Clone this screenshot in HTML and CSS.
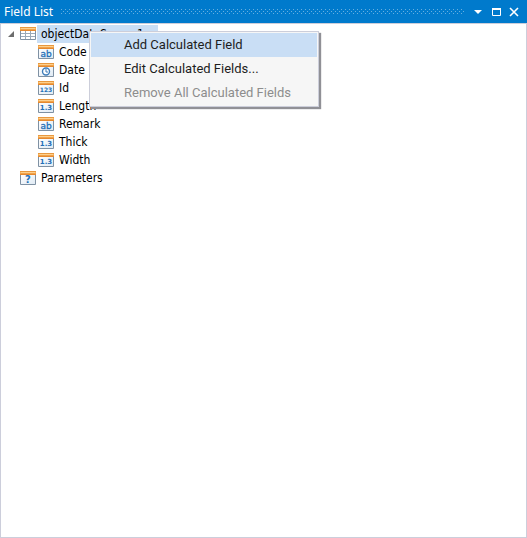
FILE: index.html
```html
<!DOCTYPE html>
<html lang="en">
<head>
<meta charset="utf-8">
<title>Field List</title>
<link rel="stylesheet" href="styles.css">
</head>
<body>
<svg class="defs" aria-hidden="true">
  <defs>
    <linearGradient id="orange" x1="0" y1="0" x2="0" y2="1">
      <stop offset="0" stop-color="#e08a30"/>
      <stop offset=".4" stop-color="#f9b860"/>
      <stop offset="1" stop-color="#e07c22"/>
    </linearGradient>
    <linearGradient id="paper" x1="0" y1="0" x2="1" y2="1">
      <stop offset="0" stop-color="#ffffff"/>
      <stop offset="1" stop-color="#dfeaf4"/>
    </linearGradient>
    <symbol id="frame" viewBox="0 0 16 16">
      <path d="M.5 4.500h15v10H.5z" fill="url(#paper)" stroke="#7f91a3"/>
      <path d="M0 1h16v4H0z" fill="url(#orange)"/>
      <path d="M1 2h14v1H1z" fill="#fdd08e"/>
    </symbol>
  </defs>
</svg>
<main class="panel">
  <header class="titlebar">
    <h1 class="title">Field List</h1>
    <svg class="grip" aria-hidden="true">
      <defs>
        <pattern id="dots" width="4" height="4" patternUnits="userSpaceOnUse">
          <path d="M0 0h1v1H0zM2 2h1v1H2z" fill="#66afe0"/>
        </pattern>
      </defs>
      <rect width="100%" height="5" fill="url(#dots)"/>
    </svg>
    <div class="actions">
      <button class="action" type="button" aria-label="Window position"><svg width="10" height="10" viewBox="0 0 10 10"><path d="M1 3h8L5 7z" fill="#fff"/></svg></button>
      <button class="action" type="button" aria-label="Maximize"><svg width="10" height="10" viewBox="0 0 10 10"><path d="M1.500 1.500h8v7h-8z" fill="none" stroke="#fff"/><path d="M1 1h9v2H1z" fill="#fff"/></svg></button>
      <button class="action" type="button" aria-label="Close"><svg width="10" height="10" viewBox="0 0 10 10"><path d="M1 1l8 8M9 1L1 9" stroke="#fff" stroke-width="1.600"/></svg></button>
    </div>
  </header>
  <ul class="tree">
    <li>
      <div class="node">
        <svg class="arrow" width="6" height="6" viewBox="0 0 6 6"><path d="M6 0v6H0z" fill="#6d6d6d"/></svg>
        <svg class="icon" viewBox="0 0 16 16"><path d="M.5 4.500h15v9H.5z" fill="#fff" stroke="#7f91a3"/><path d="M5.500 5v8M10.500 5v8M1 7.500h14M1 10.500h14" stroke="#9aa9b8" fill="none"/><path d="M0 1h16v4H0z" fill="url(#orange)"/><path d="M1 2h14v1H1z" fill="#fdd08e"/></svg>
        <span class="label selected">objectDataSource1</span>
      </div>
      <ul class="children">
        <li class="node"><svg class="icon" viewBox="0 0 16 16"><use href="#frame"/><text class="glyph ab" x="8" y="13">ab</text></svg><span class="label">Code</span></li>
        <li class="node"><svg class="icon" viewBox="0 0 16 16"><use href="#frame"/><circle cx="8" cy="9.500" r="3.500" fill="#fff" stroke="#3f7dba" stroke-width="1.400"/><path d="M8 7v3h2" fill="none" stroke="#3f7dba"/></svg><span class="label">Date</span></li>
        <li class="node"><svg class="icon" viewBox="0 0 16 16"><use href="#frame"/><text class="glyph num" x="8" y="12">123</text></svg><span class="label">Id</span></li>
        <li class="node"><svg class="icon" viewBox="0 0 16 16"><use href="#frame"/><text class="glyph dec" x="8" y="12">1.3</text></svg><span class="label">Length</span></li>
        <li class="node"><svg class="icon" viewBox="0 0 16 16"><use href="#frame"/><text class="glyph ab" x="8" y="13">ab</text></svg><span class="label">Remark</span></li>
        <li class="node"><svg class="icon" viewBox="0 0 16 16"><use href="#frame"/><text class="glyph dec" x="8" y="12">1.3</text></svg><span class="label">Thick</span></li>
        <li class="node"><svg class="icon" viewBox="0 0 16 16"><use href="#frame"/><text class="glyph dec" x="8" y="12">1.3</text></svg><span class="label">Width</span></li>
      </ul>
    </li>
    <li class="node leaf"><svg class="icon" viewBox="0 0 16 16"><use href="#frame"/><text class="glyph ask" x="8" y="13">?</text></svg><span class="label">Parameters</span></li>
  </ul>
</main>
<div class="menu" role="menu">
  <button class="item active" type="button" role="menuitem">Add Calculated Field</button>
  <button class="item" type="button" role="menuitem">Edit Calculated Fields...</button>
  <button class="item" type="button" role="menuitem" disabled>Remove All Calculated Fields</button>
</div>
</body>
</html>
```
FILE: styles.css
```css
* {
  box-sizing: border-box;
}

body {
  margin: 0;
  background: #fff;
  color: #1e1e1e;
  font: 12px/18px "DejaVu Sans Condensed", "DejaVu Sans", sans-serif;
}

.defs {
  position: absolute;
  width: 0;
  height: 0;
}

.panel {
  display: flex;
  flex-direction: column;
  min-height: 100vh;
  border: 1px solid #cccedb;
  border-top: 0;
}

.titlebar {
  display: flex;
  align-items: center;
  height: 23px;
  margin: 0 -1px;
  padding: 0 8px 0 4px;
  background: #007acc;
}

.title {
  margin: 0;
  color: #fff;
  font: 12px/23px "Noto Sans", sans-serif;
}

.grip {
  flex: 1;
  height: 5px;
  margin: 0 8px;
}

.actions {
  display: flex;
  gap: 8px;
}

.action {
  display: flex;
  width: 10px;
  padding: 0;
  border: 0;
  background: none;
}

.tree {
  flex: 1;
  margin: 0;
  padding: 1px 0 0 6px;
  border-top: 1px solid #ccceda;
  list-style: none;
}

.children {
  margin: 0;
  padding: 0 0 0 31px;
  list-style: none;
}

.node {
  display: flex;
  align-items: center;
  height: 18px;
}

.leaf {
  padding-left: 13px;
}

.arrow {
  margin: 0 6px 0 1px;
}

.icon {
  flex: none;
  width: 16px;
  height: 16px;
  margin-right: 1px;
}

.label {
  padding: 0 4px;
  line-height: 18px;
  color: #000;
}

.selected {
  padding-right: 14px;
  background: #c9def5;
}

.glyph {
  fill: #2470b8;
  font-family: "DejaVu Sans", sans-serif;
  font-weight: bold;
  text-anchor: middle;
}

.ab {
  font: 9px "DejaVu Sans", sans-serif;
  stroke: #2470b8;
  stroke-width: 0.3px;
}

.num {
  font-size: 6px;
}

.dec {
  font-size: 7px;
}

.ask {
  font-size: 10px;
}

.menu {
  position: absolute;
  top: 31px;
  left: 89px;
  display: flex;
  flex-direction: column;
  width: 230px;
  padding: 1px;
  border: 1px solid #ccceda;
  background: #f6f6f6;
  box-shadow: 2px 2px 1px #909096;
}

.item {
  height: 24px;
  padding: 0 0 0 33px;
  border: 0;
  background: none;
  color: #1e1e1e;
  font: 13px/24px Roboto, sans-serif;
  text-align: left;
}

.active {
  background: #c9def5;
}

.item:disabled {
  color: #8d8d8d;
}
```
